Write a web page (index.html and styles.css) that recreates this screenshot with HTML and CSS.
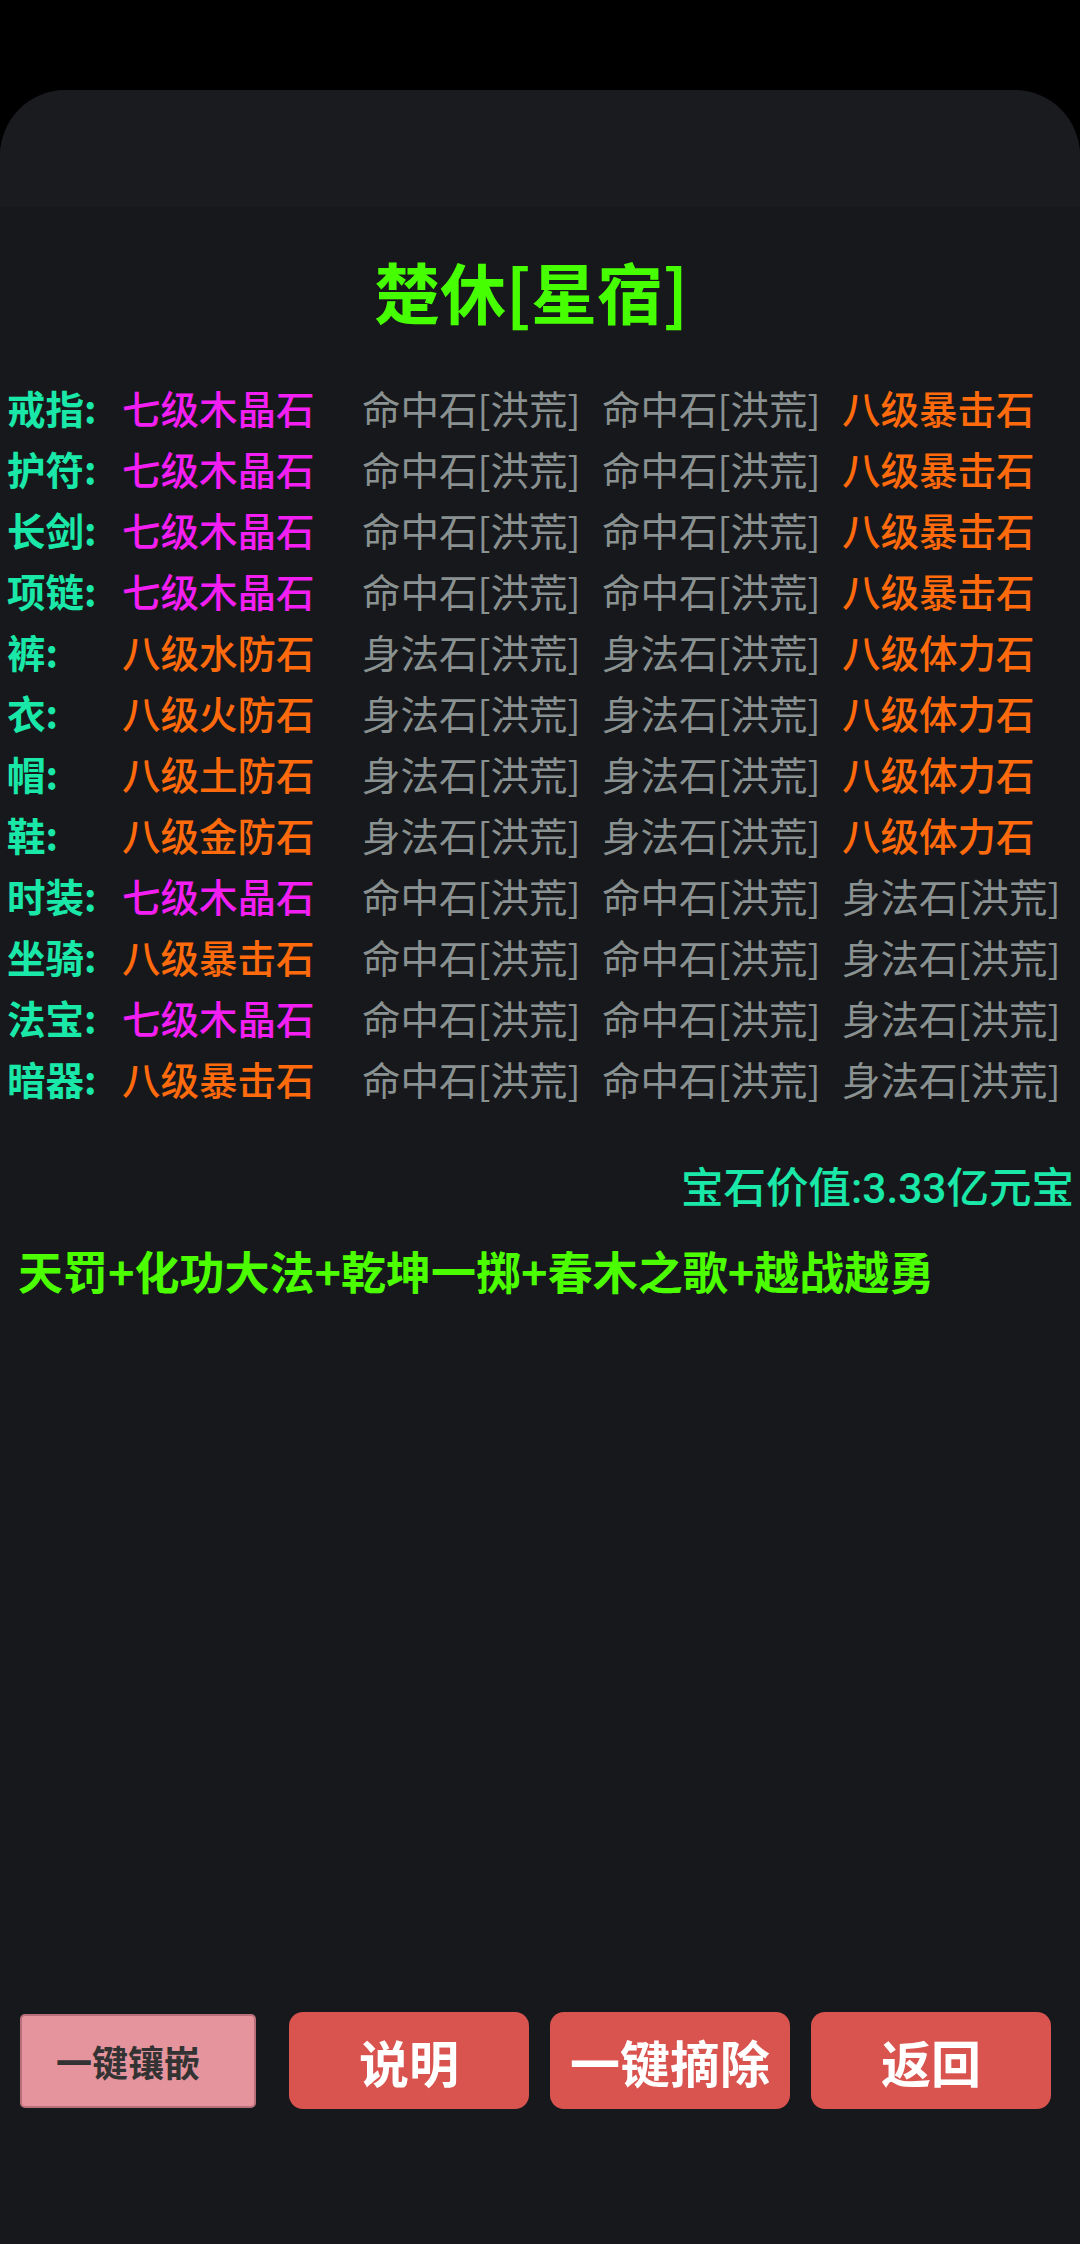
FILE: index.html
```html
<!DOCTYPE html>
<html lang="zh-CN">
<head>
<meta charset="utf-8">
<title>楚休[星宿]</title>
<link rel="stylesheet" href="styles.css">
</head>
<body>
<div class="status"></div>
<div class="card">
  <div class="band"></div>
  <h1 class="title">楚休[星宿]</h1>
  <div class="gems">
    <div class="row"><span class="lbl">戒指:</span><span class="mag">七级木晶石</span><span class="gray">命中石[洪荒]</span><span class="gray">命中石[洪荒]</span><span class="org">八级暴击石</span></div>
    <div class="row"><span class="lbl">护符:</span><span class="mag">七级木晶石</span><span class="gray">命中石[洪荒]</span><span class="gray">命中石[洪荒]</span><span class="org">八级暴击石</span></div>
    <div class="row"><span class="lbl">长剑:</span><span class="mag">七级木晶石</span><span class="gray">命中石[洪荒]</span><span class="gray">命中石[洪荒]</span><span class="org">八级暴击石</span></div>
    <div class="row"><span class="lbl">项链:</span><span class="mag">七级木晶石</span><span class="gray">命中石[洪荒]</span><span class="gray">命中石[洪荒]</span><span class="org">八级暴击石</span></div>
    <div class="row"><span class="lbl">裤:</span><span class="org">八级水防石</span><span class="gray">身法石[洪荒]</span><span class="gray">身法石[洪荒]</span><span class="org">八级体力石</span></div>
    <div class="row"><span class="lbl">衣:</span><span class="org">八级火防石</span><span class="gray">身法石[洪荒]</span><span class="gray">身法石[洪荒]</span><span class="org">八级体力石</span></div>
    <div class="row"><span class="lbl">帽:</span><span class="org">八级土防石</span><span class="gray">身法石[洪荒]</span><span class="gray">身法石[洪荒]</span><span class="org">八级体力石</span></div>
    <div class="row"><span class="lbl">鞋:</span><span class="org">八级金防石</span><span class="gray">身法石[洪荒]</span><span class="gray">身法石[洪荒]</span><span class="org">八级体力石</span></div>
    <div class="row"><span class="lbl">时装:</span><span class="mag">七级木晶石</span><span class="gray">命中石[洪荒]</span><span class="gray">命中石[洪荒]</span><span class="gray">身法石[洪荒]</span></div>
    <div class="row"><span class="lbl">坐骑:</span><span class="org">八级暴击石</span><span class="gray">命中石[洪荒]</span><span class="gray">命中石[洪荒]</span><span class="gray">身法石[洪荒]</span></div>
    <div class="row"><span class="lbl">法宝:</span><span class="mag">七级木晶石</span><span class="gray">命中石[洪荒]</span><span class="gray">命中石[洪荒]</span><span class="gray">身法石[洪荒]</span></div>
    <div class="row"><span class="lbl">暗器:</span><span class="org">八级暴击石</span><span class="gray">命中石[洪荒]</span><span class="gray">命中石[洪荒]</span><span class="gray">身法石[洪荒]</span></div>
  </div>
  <div class="value">宝石价值:3.33亿元宝</div>
  <div class="skills">天罚+化功大法+乾坤一掷+春木之歌+越战越勇</div>
  <div class="actions">
    <div class="btn btn-light">一键镶嵌</div>
    <div class="btn btn-red">说明</div>
    <div class="btn btn-red">一键摘除</div>
    <div class="btn btn-red">返回</div>
  </div>
</div>
</body>
</html>
```

FILE: styles.css
```css
* { box-sizing: border-box; }
html, body { margin: 0; padding: 0; }
body {
  background: #000;
  width: 1080px;
  min-height: 2244px;
  font-family: "Noto Sans CJK SC", "Noto Sans", sans-serif;
  display: flex;
  flex-direction: column;
}
.status { height: 90px; flex: none; }
.card {
  flex: 1;
  background: #17181c;
  border-radius: 66px 66px 0 0;
  display: flex;
  flex-direction: column;
  overflow: hidden;
}
.band {
  height: 117px;
  background: #1a1b1f;
  flex: none;
}
.title {
  margin: 38px 0 0;
  text-align: center;
  font-size: 66px;
  line-height: 90px;
  font-weight: 700;
  color: #46ff00;
  padding-right: 18px;
}
.gems {
  margin-top: 42px;
  padding-left: 7px;
}
.row {
  display: grid;
  grid-template-columns: 115px 240px 240px 240px auto;
  font-size: 38.5px;
  line-height: 61px;
  white-space: nowrap;
}
.lbl { color: #1ae8a8; font-weight: 700; }
.mag { color: #f21ef2; font-weight: 500; }
.org { color: #ff6a0c; font-weight: 500; }
.gray { color: #8a9291; font-weight: 400; }
.value {
  margin-top: 50px;
  text-align: right;
  padding-right: 6px;
  font-family: Roboto, "Noto Sans CJK SC", sans-serif;
  font-size: 42.5px;
  line-height: 60px;
  color: #1ae8a8;
  font-weight: 500;
}
.skills {
  margin-top: 22px;
  padding-left: 18px;
  font-size: 45px;
  line-height: 60px;
  color: #4cff00;
  font-weight: 700;
  white-space: nowrap;
}
.actions {
  margin-top: auto;
  padding: 0 0 135px 20px;
  display: flex;
  align-items: center;
  gap: 21px;
}
.btn {
  display: flex;
  align-items: center;
  justify-content: center;
  white-space: nowrap;
}
.btn-light {
  width: 236px;
  height: 94px;
  margin-right: 12px;
  background: #e5939d;
  border: 2px solid #b86f79;
  border-radius: 5px;
  color: #333;
  font-size: 36px;
  font-weight: 700;
  padding-right: 20px;
}
.btn-red {
  width: 240px;
  height: 97px;
  background: #d9534f;
  border-radius: 14px;
  color: #fff;
  font-size: 50px;
  font-weight: 700;
}
```
